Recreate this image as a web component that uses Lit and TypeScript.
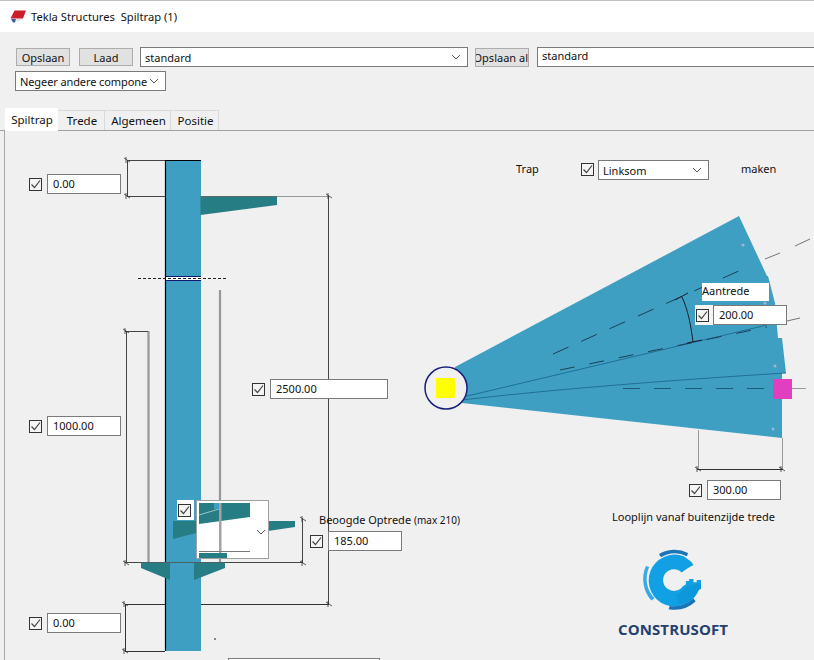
import { LitElement, html, css, svg } from "lit";
import { customElement } from "lit/decorators.js";

const fields = [
  { x: 29, y: 174, w: 74, v: "0.00", gap: 5 },
  { x: 29, y: 416, w: 74, v: "1000.00", gap: 5 },
  { x: 29, y: 613, w: 74, v: "0.00", gap: 5 },
  { x: 252, y: 379, w: 118, v: "2500.00", gap: 5 },
  { x: 310, y: 531, w: 74, v: "185.00", gap: 5 },
  { x: 689, y: 480, w: 74, v: "300.00", gap: 5 },
  { x: 696, y: 305, w: 74, v: "200.00", gap: 4, backed: true },
];
const labels = [
  { x: 516, y: 161, t: "Trap" },
  { x: 741, y: 161, t: "maken" },
  { x: 612, y: 509, t: "Looplijn vanaf buitenzijde trede" },
];
const chev = html`<svg class="chev" width="10" height="6" viewBox="0 0 10 6"><path d="M1 1l4 4 4-4" fill="none" stroke="#555" stroke-width="1"/></svg>`;
const check = html`<span class="cb"><svg width="11" height="11" viewBox="0 0 11 11"><path d="M1.5 5.500l3 3 5.500-7" fill="none" stroke="#444" stroke-width="1.200"/></svg></span>`;

const tick = (x: number, y: number) => svg`<path d="M${x - 3} ${y - 2}l6 4M${x - 1} ${y - 3}v6" stroke="#333" stroke-width=".8" fill="none"/>`;

@customElement("app-root")
export class AppRoot extends LitElement {
  static styles = css`
    :host { display: block; width: 814px; height: 660px; overflow: hidden; background: #f0f0f0; font: 11px "Noto Sans", sans-serif; color: #111; }
    .title { height: 31px; background: #fff; border-top: 1px solid #bdbdbd; display: flex; align-items: center; gap: 5px; padding-left: 10px; font-size: 11.200px; white-space: pre; }
    .bar { padding: 15px 0 0 16px; height: 61px; }
    .row { display: flex; align-items: center; white-space: nowrap; }
    .row2 { margin-top: 4px; margin-left: -1px; }
    .tight { letter-spacing: -.1px; }
    .btn { box-sizing: border-box; flex: none; height: 18px; width: 54px; background: #e1e1e1; border: 1px solid #adadad; display: flex; align-items: center; justify-content: center; overflow: hidden; }
    .btn.clip { justify-content: flex-end; margin: 0 8px 0 7px; height: 19px; }
    .btn.clip span { flex: none; }
    .laad { margin: 0 7px 0 9px; }
    .box { box-sizing: border-box; flex: none; height: 20px; background: #fff; border: 1px solid #7a7a7a; display: flex; align-items: center; padding: 0 4px; justify-content: space-between; overflow: hidden; }
    .box.up { padding-bottom: 3px; }
    .chev { flex: none; margin-right: 2px; }
    .tabs { display: flex; align-items: flex-end; height: 22px; padding-left: 5px; border-bottom: 1px solid #a0a0a0; position: relative; }
    .tab { box-sizing: border-box; height: 20px; padding-left: 2px; border: 1px solid #d9d9d9; border-bottom: none; border-left: none; display: flex; align-items: center; justify-content: center; font-size: 11.500px; }
    .tab.on { background: #fff; border: none; margin-bottom: -1px; height: 23px; padding-left: 1px; }
    .canvas { position: relative; height: 529px; border-left: 1px solid #a8a8a8; margin-left: 4px; overflow: hidden; }
    .draw { position: absolute; left: -5px; top: 0; display: block; }
    .field { position: absolute; display: flex; align-items: center; }
    .field.backed { background: #f4f4f4; }
    .cb { box-sizing: border-box; flex: none; width: 13px; height: 13px; border: 1px solid #333; background: #f4f4f4; display: flex; align-items: center; justify-content: center; }
    .val { padding: 0 0 2px 5px; }
    .lbl { position: absolute; white-space: nowrap; line-height: 15px; }
    .big { font-size: 10px; }
    .white { position: absolute; background: #fff; }
    .aan { left: 697px; top: 152px; width: 67px; height: 18px; line-height: 16px; }
    .thumb { position: absolute; left: 191px; top: 369px; width: 73px; height: 59px; box-sizing: border-box; background: #fff; border: 1px solid #a0a0a0; }
    .thumb svg { display: block; }
    .thumb svg.chev { position: absolute; left: 59px; top: 28px; }
    .tcb { left: 172px; top: 369px; width: 17px; height: 20px; display: flex; align-items: center; padding-left: 1px; box-sizing: border-box; }
    .linksom { position: absolute; left: 593px; top: 29px; width: 111px; }
    .lcb { position: absolute; left: 576px; top: 32px; }
    .word { position: absolute; left: 613px; top: 489px; font: 700 15px "Open Sans", sans-serif; color: #24406e; letter-spacing: .1px; line-height: 18px; }
    .stub { position: absolute; left: 223px; top: 527px; width: 152px; height: 20px; box-sizing: border-box; background: #fff; border: 1px solid #7a7a7a; }
  `;

  render() {
    return html`
      <div class="title">
        <svg width="16" height="14" viewBox="0 0 16 14"><path d="M4.500 0.500H16L13 8.500H0.500z" fill="#cc1f2b"/><path d="M1 9H6L5 12.500H3z" fill="#3a5e9a"/><path d="M6.500 9H13L8 11.500H6z" fill="#e2e2e2"/></svg>
        <span>Tekla Structures  Spiltrap (1)</span>
      </div>
      <div class="bar">
        <div class="row">
          <div class="btn">Opslaan</div>
          <div class="btn laad">Laad</div>
          <div class="box" style="width:328px"><span>standard</span>${chev}</div>
          <div class="btn clip"><span>Opslaan al</span></div>
          <div class="box up" style="width:300px"><span>standard</span></div>
        </div>
        <div class="row row2">
          <div class="box" style="width:151px"><span class="tight">Negeer andere compone</span>${chev}</div>
        </div>
      </div>
      <div class="tabs">
        <div class="tab on" style="width:53px">Spiltrap</div>
        <div class="tab" style="width:47px">Trede</div>
        <div class="tab" style="width:66px">Algemeen</div>
        <div class="tab" style="width:48px">Positie</div>
      </div>
      <div class="canvas">
        ${this.drawing()}
        <div class="white aan"><span>Aantrede</span></div>
        ${fields.map((f) => html`
          <div class="field ${f.backed ? "backed" : ""}" style="left:${f.x - 5}px;top:${f.y - 131}px;height:20px;gap:${f.gap}px;${f.backed ? "padding-left:1px;margin-left:-1px" : ""}">
            ${check}
            <div class="box val" style="width:${f.w}px">${f.v}</div>
          </div>`)}
        ${labels.map((l) => html`<div class="lbl" style="left:${l.x - 5}px;top:${l.y - 131}px">${l.t}</div>`)}
        <div class="lbl" style="left:314px;top:381px">Beoogde Optrede <span class="big">(max 210)</span></div>
        <div class="lcb">${check}</div>
        <div class="box linksom"><span>Linksom</span>${chev}</div>
        <div class="white tcb">${check}</div>
        <div class="thumb">
          <svg width="71" height="57" viewBox="0 0 71 57">
            <path d="M2 2h51v14L2 23z" fill="#267d84"/>
            <path d="M2 14l20-6" stroke="#cfe3e6" stroke-width=".7" fill="none"/>
            <path d="M17 2h5v6h-5z" fill="#3f9fc2"/>
            <rect x="22" y="2" width="2.500" height="50" fill="#a3a3a3"/>
            <rect x="2" y="52" width="28" height="5" fill="#267d84"/>
            <rect x="2" y="50" width="51" height="1" fill="#777"/>
          </svg>
          ${chev}
        </div>
        <div class="word">CONSTRUSOFT</div>
        <div class="stub"></div>
      </div>
    `;
  }

  drawing() {
    return html`<svg class="draw" width="814" height="529" viewBox="0 131 814 529" fill="none">
      <rect x="166" y="160" width="35" height="491" fill="#3f9fc2"/>
      <path d="M165.500 160V651M165.500 160.500H201" stroke="#000" stroke-width="1.200"/>
      <rect x="166" y="277" width="35" height="3" fill="#fff"/>
      <path d="M166 276.500H201M166 280.500H201" stroke="#111a70" stroke-width="1"/>
      <path d="M138 278.500H226" stroke="#222" stroke-width="1" stroke-dasharray="3 2"/>
      <path d="M148.500 331V563M220 290V563" stroke="#979797" stroke-width="2.200"/>
      <path d="M127 160.500H165M127 196.500H165M127.500 160V196" stroke="#444"/>
      ${tick(127, 160)}${tick(127, 196)}
      <path d="M277 196.500H329" stroke="#999"/>
      <path d="M328.500 196V604" stroke="#444"/>
      ${tick(329, 196)}${tick(329, 604)}
      <path d="M125 604.500H165M201 604.500H329M125.500 604V651M125 651.500H165" stroke="#333"/>
      ${tick(125, 604)}${tick(125, 651)}
      <path d="M126.500 331V563M125 331.500H148" stroke="#444"/>
      ${tick(126, 331)}
      <path d="M125 562.500H303M302.500 519V563" stroke="#444"/>
      ${tick(126, 563)}${tick(303, 519)}${tick(303, 563)}
      <path d="M200.500 196H277V205L200.500 215z" fill="#267d84"/>
      <path d="M201 196.500H277" stroke="#5b6a6d"/>
      <path d="M173 521H196V533L173 539z" fill="#267d84"/>
      <path d="M268 521H295V527L268 531z" fill="#267d84"/>
      <path d="M141 563H170V580L141 568zM194 563H225V568L194 580z" fill="#267d84"/>
      <path d="M141 562.500H225" stroke="#4f6f72" stroke-width=".7"/>
      <circle cx="215" cy="639" r=".8" fill="#000"/>
      <path d="M455 367L739 216L767 276L768 276L775 303L778 338L782 338L786 373L782 373V438L462 403z" fill="#3f9fc2"/>
      <path d="M463 397L767 325M462 400C530 392 640 382 786 373" stroke="#1c6a8f" stroke-width=".9"/>
      <path d="M553 354L750 266" stroke="#1b3f55" stroke-width="1" stroke-dasharray="17 14"/>
      <path d="M560 370L767 327" stroke="#1b3f55" stroke-width="1" stroke-dasharray="15 15"/>
      <path d="M623 388.500H773" stroke="#1b5a78" stroke-width="1.200" stroke-dasharray="17 14"/>
      <path d="M765 259L780 253M795 246L810 239M787 321L800 318" stroke="#666" stroke-width=".9"/>
      <path d="M675 300L688 293M682 297C688 310 691 326 693 342M687 343L702 340" stroke="#1a1f2a" stroke-width="1"/>
      <circle cx="743" cy="245" r="1.500" fill="#9fb4d8"/>
      <circle cx="765" cy="303" r="1.500" fill="#9fb4d8"/>
      <circle cx="775" cy="366" r="1.500" fill="#9fb4d8"/>
      <circle cx="773" cy="429" r="1.500" fill="#9fb4d8"/>
      <circle cx="446" cy="388" r="21" fill="#f0f0f0" stroke="#1a1f78" stroke-width="1.500"/>
      <rect x="436" y="378" width="19" height="20" fill="#ffff00"/>
      <rect x="773" y="379" width="19" height="20" fill="#e040c0"/>
      <path d="M792 388.500H806" stroke="#999"/>
      <path d="M698.500 430V469M782.500 438V469" stroke="#999"/>
      <path d="M697 469.500H783" stroke="#333"/>
      ${tick(698, 469)}${tick(782, 469)}
      <g transform="translate(674 580) scale(1.080)">
        <path d="M7 -7A10 10 0 1 0 8 6L11 4V1H14V-1H18V2H21V0H25V8L23 9A24 24 0 1 1 9 -22L16 -17L18 -14L13 -11z" fill="#12a0e4"/>
        <path d="M11 6L25 3V8L23 9A24 24 0 0 1 4 23L2 13A13 13 0 0 0 11 6z" fill="#0e98dc"/>
        <path d="M-14 -24A28 28 0 0 1 13 -25L12 -22A25 25 0 0 0 -12 -21z" fill="#1b74b8"/>
        <path d="M-26 -13A30 30 0 0 0 -21 19L-18 17A26 26 0 0 1 -23 -12z" fill="#36a9e6"/>
        <path d="M-5 27A29 29 0 0 0 20 20L18 17A26 26 0 0 1 -4 24z" fill="#1b74b8"/>
      </g>
    </svg>`;
  }
}
